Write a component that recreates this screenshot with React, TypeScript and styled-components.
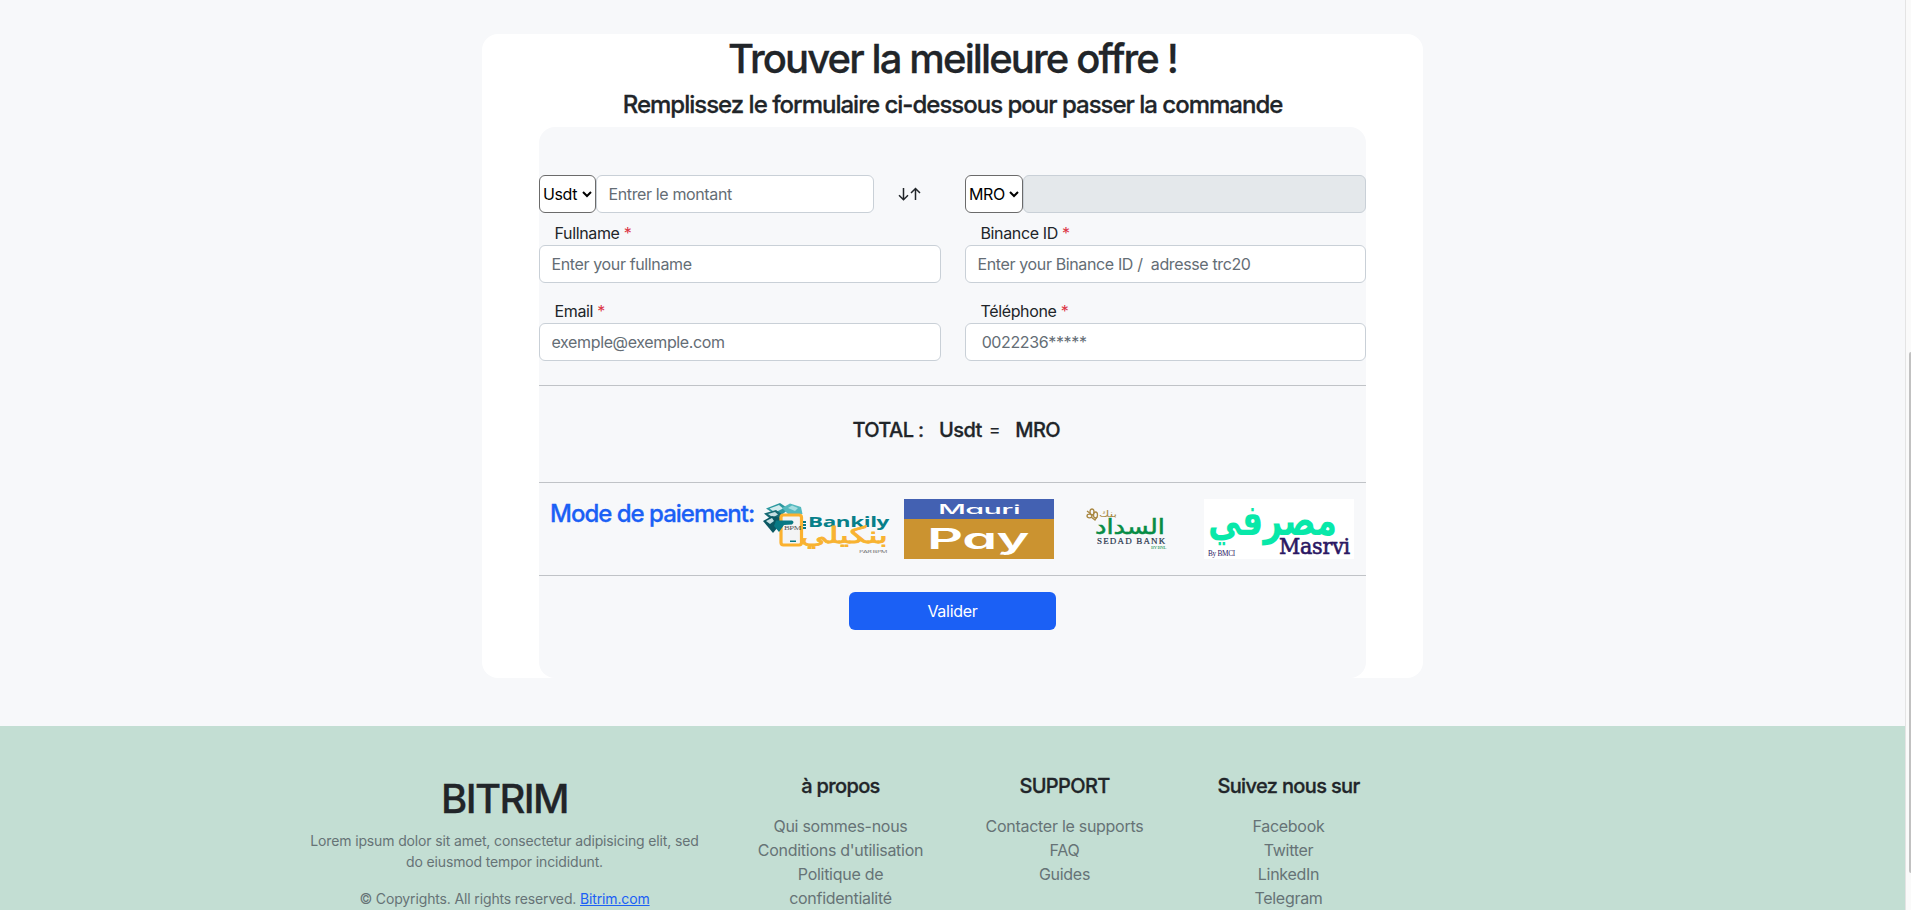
import React from "react";
import styled, { createGlobalStyle } from "styled-components";

const GlobalStyle = createGlobalStyle`
  * { box-sizing: border-box; }
  body {
    margin: 0;
    overflow: hidden;
    background: #f7f8fa;
    color: #212529;
    font: 400 16px/24px Inter, "Liberation Sans", sans-serif;
    letter-spacing: -0.28px;
  }
  h1, h2, h4, h5, p, ul { margin: 0; padding: 0; font-weight: 500; }
  h1, h2, h4, h5 { -webkit-text-stroke: 0.3px currentColor; }
`;

const Viewport = styled.div`
  display: flex;
  height: 910px;
  overflow: hidden;
`;

const Page = styled.div`
  flex: 1;
  min-width: 0;
  display: flex;
  flex-direction: column;
  align-items: center;
`;

const ScrollTrack = styled.div`
  width: 6px;
  padding: 352px 0 0 3px;
  background: #fafafa;
  border-left: 1px solid #e4e4e4;
`;

const ScrollThumb = styled.div`
  height: 521px;
  background: #c1c1c1;
  border-radius: 2px 0 0 2px;
`;

const Card = styled.main`
  width: 941px;
  height: 644px;
  flex: none;
  margin: 34px 0 48px;
  padding: 0 57px;
  background: #fff;
  border-radius: 16px;
  text-align: center;
`;

const Title = styled.h1<{ $spacing: number }>`
  font-size: 40px;
  line-height: 50px;
  letter-spacing: ${(p) => p.$spacing}px;
  margin-bottom: 6px;
`;

const Subtitle = styled.h2`
  font-size: 24px;
  line-height: 29px;
  letter-spacing: -1px;
  margin-bottom: 8px;
`;

const Panel = styled.form`
  height: 551px;
  padding-top: 48px;
  background: #f7f8fa;
  border-radius: 16px;
`;

const Columns = styled.div<{ $gap?: number }>`
  display: grid;
  grid-template-columns: 402px 401px;
  column-gap: 24px;
  margin-bottom: ${(p) => p.$gap ?? 0}px;
  text-align: left;
`;

const AmountRow = styled.div`
  display: flex;
`;

const SelectBox = styled.div<{ $width: number }>`
  display: flex;
  align-items: center;
  justify-content: space-between;
  flex: none;
  width: ${(p) => p.$width}px;
  height: 38px;
  padding: 0 3px;
  color: #000;
  letter-spacing: -0.4px;
  background: #fff;
  border: 1px solid #6b6b6b;
  border-radius: 6px;
`;

const Input = styled.input<{ $width?: string }>`
  display: block;
  width: ${(p) => p.$width ?? "100%"};
  min-width: 0;
  height: 38px;
  padding: 0 11.500px;
  font: inherit;
  letter-spacing: -0.37px;
  color: #212529;
  background: #fff;
  border: 1px solid #c9d0d7;
  border-radius: 6px;
  outline: none;
  &::placeholder { color: #646d75; opacity: 1; }
  &:disabled { background: #e4e8eb; }
`;

const Swap = styled.div`
  display: flex;
  align-items: center;
  padding-left: 24px;
`;

const Label = styled.label`
  display: block;
  padding-left: 15.500px;
  letter-spacing: -0.36px;
`;

const Required = styled.span`
  color: #dc3545;
`;

const Rule = styled.div`
  height: 1px;
  background: #c0c3c7;
`;

const Total = styled.div`
  display: flex;
  justify-content: center;
  align-items: center;
  height: 96px;
  padding: 0 0 8px 7.500px;
`;

const TotalPart = styled.h5<{ $right: number }>`
  font-size: 20px;
  margin-right: ${(p) => p.$right}px;
  letter-spacing: -0.6px;
`;

const Equals = styled.span`
  margin-right: 15px;
  font-size: 18px;
`;

const Payment = styled.div`
  display: flex;
  height: 92px;
  padding: 16px 12px 16px 11px;
`;

const PaymentTitle = styled.h4`
  width: 204px;
  flex: none;
  color: #1b60f5;
  font-size: 24px;
  line-height: 29px;
  letter-spacing: -1px;
  text-align: left;
  white-space: nowrap;
`;

const Logo = styled.svg`
  width: 150px;
  height: 60px;
  flex: none;
  overflow: visible;
`;

const GeometricText = styled.text`
  font-family: Inter, sans-serif;
  font-feature-settings: "cv11";
`;

const Submit = styled.button`
  width: 207px;
  height: 38px;
  margin-top: 16px;
  padding: 0;
  color: #fff;
  background: #1b60f5;
  border: 0;
  border-radius: 6px;
  font: inherit;
  letter-spacing: inherit;
`;

const Footer = styled.footer`
  display: flex;
  justify-content: center;
  align-self: stretch;
  flex: none;
  height: 220px;
  padding-top: 48px;
  background: #c3ded3;
  text-align: center;
`;

const FooterInner = styled.div`
  display: grid;
  grid-template-columns: 448px 224px 224px 224px;
  width: 1344px;
`;

const FooterColumn = styled.section`
  padding: 0 12px;
`;

const Small = styled.p`
  padding: 0 12px;
  margin-bottom: 16px;
  font-size: 14px;
  font-weight: 400;
  line-height: 21px;
  letter-spacing: -0.14px;
  color: #667376;
`;

const SiteLink = styled.a`
  color: #1b60f5;
  text-decoration: underline;
`;

const FooterTitle = styled.h5`
  font-size: 20px;
  line-height: 24px;
  letter-spacing: -0.65px;
  margin-bottom: 16px;
`;

const LinkList = styled.ul`
  && { padding: 0 8px; }
`;

const LinkItem = styled.li`
  list-style: none;
  font-weight: 400;
  color: #667376;
`;

const Chevron = () => (
  <svg width="10" height="8" viewBox="0 0 10 8" fill="none" stroke="#000" strokeWidth="2">
    <path d="M1 2l4 4 4-4" />
  </svg>
);

const SwapArrows = () => (
  <svg width="23" height="14" viewBox="0 0 23 14" fill="none" stroke="#212529" strokeWidth="1.5">
    <path d="M5.500 1v11.500M1 8.200l4.500 4.500L10 8.200M17.500 13V1.500M13 6l4.500-4.500L22 6" />
  </svg>
);

const Bankily = () => (
  <Logo viewBox="0 0 150 60">
    <path d="M12 9.500L26 4l9 6-10 8z" fill="#2d99a0" />
    <path d="M15.500 9.500L25 6l4 3.500-8 4z" fill="#d4ecee" />
    <path d="M28 9l8-4.500L47 8l1.500 7H34z" fill="#54b9be" />
    <path d="M34 9l4-2.500 6 2.500-3 3z" fill="#a5dde0" />
    <path d="M10 14.500l12-3.500 7 5-9 7z" fill="#176a73" />
    <path d="M14 15l7-2 3 2.500-5 3z" fill="#c5dfe2" />
    <path d="M9 22l9-5 10 2-4 9-5 6z" fill="#0b5863" />
    <path d="M12 22l6-3 2 3-4 3z" fill="#c5dfe2" />
    <rect x="27" y="16" width="20.500" height="30" rx="2.500" fill="#f3f4f5" stroke="#fbb12e" strokeWidth="3.200" />
    <path d="M22 21.500h16q3 1.500 0 4l-8 .5-5 7-5-6z" fill="#087984" />
    <path d="M49 22h3v2h-3zM49 25h3v2h-3zM49 28h3v2h-3zM36 41.500h6V43h-6z" fill="#087984" />
    <text x="30" y="31" fontSize="6" fill="#555" textLength="17" lengthAdjust="spacingAndGlyphs" fontFamily="Liberation Serif">BPM</text>
    <text x="54" y="28" fontSize="15" fontWeight="700" fill="#08808a" textLength="81" lengthAdjust="spacingAndGlyphs" fontFamily="Open Sans">Bankily</text>
    <text x="46" y="44" fontSize="23" fill="#f8b331" stroke="#f8b331" strokeWidth=".8" textLength="88" lengthAdjust="spacingAndGlyphs" fontFamily="DejaVu Sans">بنكيلي</text>
    <text x="105" y="53.700" fontSize="4" fill="#777" textLength="28" lengthAdjust="spacingAndGlyphs" fontFamily="Open Sans">PAR BPM</text>
  </Logo>
);

const MauriPay = () => (
  <Logo viewBox="0 0 150 60">
    <path d="M0 0h150v20H0z" fill="#4361b2" />
    <path d="M0 20h150v40H0z" fill="#cb9330" />
    <GeometricText x="34" y="15.400" fontSize="12.500" fontWeight="500" fill="#fff" textLength="82" lengthAdjust="spacingAndGlyphs">Mauri</GeometricText>
    <GeometricText x="23" y="50" fontSize="28" fontWeight="600" fill="#fff" textLength="102" lengthAdjust="spacingAndGlyphs">Pay</GeometricText>
  </Logo>
);

const Sedad = () => (
  <Logo viewBox="0 0 150 60">
    <g fill="none" stroke="#a98843" strokeWidth="1.300">
      <ellipse cx="38" cy="13" rx="2" ry="3" />
      <ellipse cx="35.500" cy="17" rx="2.500" ry="1.800" />
      <ellipse cx="41.500" cy="16" rx="2" ry="3" />
      <path d="M37 18l4 3 2-3M33 12l4 3" />
    </g>
    <text x="45" y="17.500" fontSize="9" fill="#a98843" textLength="18" lengthAdjust="spacingAndGlyphs" fontFamily="DejaVu Sans">بنك</text>
    <text x="41" y="35" fontSize="21" fill="#078c45" stroke="#078c45" strokeWidth=".5" textLength="70" lengthAdjust="spacingAndGlyphs" fontFamily="DejaVu Sans">السداد</text>
    <text x="43" y="45" fontSize="9" fill="#27344b" stroke="#27344b" strokeWidth=".2" textLength="68" lengthAdjust="spacing" fontFamily="Liberation Serif">SEDAD BANK</text>
    <text x="97" y="50" fontSize="4" fill="#078c45" textLength="15" lengthAdjust="spacingAndGlyphs" fontFamily="Liberation Serif">BY BNL</text>
  </Logo>
);

const Masrvi = () => (
  <Logo viewBox="0 0 150 60">
    <path d="M0 0h150v60H0z" fill="#fff" />
    <text x="4" y="36" fontSize="43" fontWeight="700" fill="#08e8a9" textLength="129" lengthAdjust="spacingAndGlyphs" fontFamily="DejaVu Sans">مصرفي</text>
    <text x="75" y="55" fontSize="22" fill="#2b1763" stroke="#2b1763" strokeWidth=".6" textLength="71" lengthAdjust="spacingAndGlyphs" fontFamily="DejaVu Serif">Masrvi</text>
    <text x="4" y="56.500" fontSize="7.500" fill="#2b1763" textLength="27" lengthAdjust="spacingAndGlyphs" fontFamily="Liberation Serif">By BMCI</text>
  </Logo>
);

const Field = ({ label, placeholder }: { label: string; placeholder: string }) => (
  <div>
    <Label>
      {label} <Required>*</Required>
    </Label>
    <Input placeholder={placeholder} />
  </div>
);

const footerLinks = [
  { title: "à propos", items: ["Qui sommes-nous", "Conditions d'utilisation", "Politique de confidentialité"] },
  { title: "SUPPORT", items: ["Contacter le supports", "FAQ", "Guides"] },
  { title: "Suivez nous sur", items: ["Facebook", "Twitter", "LinkedIn", "Telegram"] },
];

export default function App() {
  return (
    <Viewport>
      <GlobalStyle />
      <Page>
        <Card>
          <Title $spacing={-1.88}>Trouver la meilleure offre !</Title>
          <Subtitle>Remplissez le formulaire ci-dessous pour passer la commande</Subtitle>
          <Panel>
            <Columns $gap={8}>
              <AmountRow>
                <SelectBox $width={57}>Usdt<Chevron /></SelectBox>
                <Input $width="278px" placeholder="Entrer le montant" />
                <Swap><SwapArrows /></Swap>
              </AmountRow>
              <AmountRow>
                <SelectBox $width={58}>MRO<Chevron /></SelectBox>
                <Input disabled />
              </AmountRow>
            </Columns>
            <Columns $gap={16}>
              <Field label="Fullname" placeholder="Enter your fullname" />
              <Field label="Binance ID" placeholder="Enter your Binance ID /  adresse trc20" />
            </Columns>
            <Columns $gap={24}>
              <Field label="Email" placeholder="exemple@exemple.com" />
              <Field label="Téléphone" placeholder=" 0022236*****" />
            </Columns>
            <Rule />
            <Total>
              <TotalPart $right={15.5}>TOTAL :</TotalPart>
              <TotalPart $right={7}>Usdt</TotalPart>
              <Equals>=</Equals>
              <TotalPart $right={0}>MRO</TotalPart>
            </Total>
            <Rule />
            <Payment>
              <PaymentTitle>Mode de paiement:</PaymentTitle>
              <Bankily />
              <MauriPay />
              <Sedad />
              <Masrvi />
            </Payment>
            <Rule />
            <Submit type="button">Valider</Submit>
          </Panel>
        </Card>
        <Footer>
          <FooterInner>
            <FooterColumn>
              <Title $spacing={-1.6}>BITRIM</Title>
              <Small>Lorem ipsum dolor sit amet, consectetur adipisicing elit, sed do eiusmod tempor incididunt.</Small>
              <Small>© Copyrights. All rights reserved. <SiteLink>Bitrim.com</SiteLink></Small>
            </FooterColumn>
            {footerLinks.map((group) => (
              <FooterColumn key={group.title}>
                <FooterTitle>{group.title}</FooterTitle>
                <LinkList>{group.items.map((item) => <LinkItem key={item}>{item}</LinkItem>)}</LinkList>
              </FooterColumn>
            ))}
          </FooterInner>
        </Footer>
      </Page>
      <ScrollTrack><ScrollThumb /></ScrollTrack>
    </Viewport>
  );
}
